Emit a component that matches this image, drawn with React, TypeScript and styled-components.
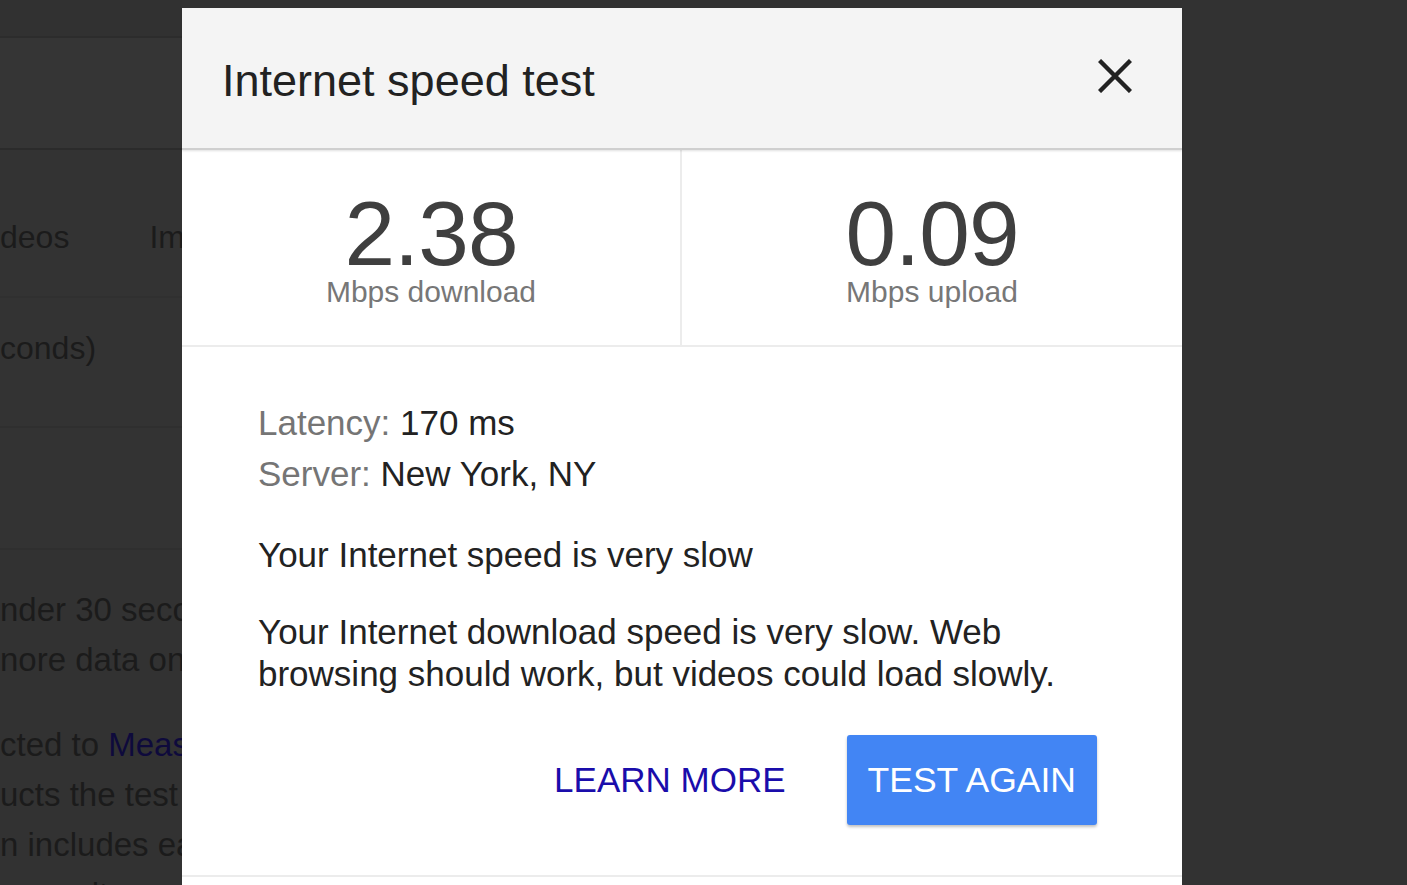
import React from "react";
import styled, { createGlobalStyle } from "styled-components";

const GlobalStyle = createGlobalStyle`
  html, body {
    margin: 0;
    padding: 0;
    background: #323232;
  }
  body {
    font-family: "Liberation Sans", Arial, sans-serif;
  }
`;

const Page = styled.div`
  display: flex;
  width: 1407px;
  height: 885px;
  overflow: hidden;
  background: #323232;
`;

// dimmed search results page that peeks out on the left
const Backdrop = styled.div`
  width: 182px;
  flex-shrink: 0;
  overflow: hidden;
  display: flex;
  flex-direction: column;
  white-space: nowrap;
  color: #1b1b1b;
`;

const BackdropBand = styled.div<{ h: number; bg?: string; line?: string; top?: number }>`
  height: ${({ h }) => h}px;
  flex-shrink: 0;
  box-sizing: border-box;
  padding-top: ${({ top }) => top || 0}px;
  background: ${({ bg }) => bg || "#333333"};
  border-bottom: ${({ line }) => (line ? `2px solid ${line}` : "none")};
  display: flex;
  align-items: flex-start;
  font-size: 32px;
  line-height: 36px;
`;

const Tab = styled.span<{ gap?: number }>`
  margin-left: ${({ gap }) => gap || 0}px;
`;

const BackdropText = styled.div`
  display: flex;
  flex-direction: column;
  padding-top: 35px;
  font-size: 33px;
  line-height: 50px;
`;

const BackdropGap = styled.div`
  height: 35px;
`;

const DimLink = styled.span`
  color: #0e0a3c;
`;

const Modal = styled.div`
  width: 1000px;
  flex-shrink: 0;
  margin-top: 8px;
  background: #ffffff;
  display: flex;
  flex-direction: column;
`;

const Header = styled.div`
  height: 140px;
  background: #f4f4f4;
  display: flex;
  align-items: center;
  justify-content: space-between;
  padding: 0 50px 0 40px;
  border-bottom: 2px solid #cfcfcf;
  box-shadow: 0 1px 2px rgba(0, 0, 0, 0.12);
  position: relative;
  z-index: 1;
`;

const Title = styled.h1`
  margin: 0;
  font-weight: 400;
  font-size: 45px;
  color: #222222;
  padding-top: 5px;
`;

const CloseButton = styled.button`
  border: none;
  background: none;
  padding: 0;
  width: 34px;
  height: 34px;
  margin-top: -4px;
  cursor: pointer;
  display: flex;
`;

const Stats = styled.div`
  display: grid;
  grid-template-columns: 1fr 1fr;
  height: 195px;
  border-bottom: 2px solid #ececec;
`;

const Stat = styled.div<{ divider?: boolean }>`
  display: flex;
  flex-direction: column;
  align-items: center;
  padding-top: 44px;
  border-right: ${({ divider }) => (divider ? "2px solid #ececec" : "none")};
`;

const Speed = styled.div`
  font-size: 91px;
  line-height: 80px;
  letter-spacing: -1px;
  color: #3f3f3f;
`;

const Unit = styled.div`
  font-size: 30px;
  line-height: 32px;
  color: #777777;
  margin-top: 2px;
`;

const Body = styled.div`
  padding: 50px 85px 50px 76px;
  display: flex;
  flex-direction: column;
  border-bottom: 2px solid #ececec;
  font-size: 35px;
  color: #222222;
`;

const InfoLine = styled.div`
  line-height: 51px;
`;

const InfoLabel = styled.span`
  color: #757575;
`;

const Verdict = styled.div`
  margin-top: 35px;
  line-height: 42px;
`;

const Description = styled.p`
  margin: 35px 0 0;
  line-height: 42px;
`;

const Actions = styled.div`
  display: flex;
  justify-content: flex-end;
  align-items: center;
  gap: 61px;
  margin-top: 40px;
`;

const TextButton = styled.button`
  border: none;
  background: none;
  padding: 0;
  font-family: inherit;
  font-size: 35px;
  color: #1a0dab;
  cursor: pointer;
`;

const PrimaryButton = styled.button`
  border: none;
  border-radius: 3px;
  height: 90px;
  padding: 0 21px;
  background: #4285f4;
  color: #ffffff;
  font-family: inherit;
  font-size: 35.5px;
  box-shadow: 0 2px 3px rgba(0, 0, 0, 0.25);
  cursor: pointer;
`;

const CloseIcon = () => (
  <svg width="34" height="34" viewBox="0 0 34 34">
    <path d="M1.5 1.5 L32.5 32.5 M32.5 1.5 L1.5 32.5" stroke="#222" strokeWidth="4.4" />
  </svg>
);

export default function App() {
  return (
    <>
      <GlobalStyle />
      <Page>
        <Backdrop>
          <BackdropBand h={38} bg="#313131" line="#2c2c2c" />
          <BackdropBand h={112} bg="#353535" line="#2b2b2b" />
          <BackdropBand h={148} bg="#333333" line="#303030" top={69}>
            <Tab>deos</Tab>
            <Tab gap={80}>Images</Tab>
          </BackdropBand>
          <BackdropBand h={130} bg="#333333" line="#2f2f2f" top={32}>
            <Tab>conds)</Tab>
          </BackdropBand>
          <BackdropBand h={122} bg="#333333" line="#2f2f2f" />
          <BackdropText>
            <span>nder 30 seconds</span>
            <span>nore data on</span>
            <BackdropGap />
            <span>
              cted to <DimLink>Measurement</DimLink>
            </span>
            <span>ucts the test</span>
            <span>n includes each</span>
            <span>e results</span>
          </BackdropText>
        </Backdrop>

        <Modal>
          <Header>
            <Title>Internet speed test</Title>
            <CloseButton aria-label="Close">
              <CloseIcon />
            </CloseButton>
          </Header>

          <Stats>
            <Stat divider>
              <Speed>2.38</Speed>
              <Unit>Mbps download</Unit>
            </Stat>
            <Stat>
              <Speed>0.09</Speed>
              <Unit>Mbps upload</Unit>
            </Stat>
          </Stats>

          <Body>
            <InfoLine>
              <InfoLabel>Latency:</InfoLabel> 170 ms
            </InfoLine>
            <InfoLine>
              <InfoLabel>Server:</InfoLabel> New York, NY
            </InfoLine>
            <Verdict>Your Internet speed is very slow</Verdict>
            <Description>
              Your Internet download speed is very slow. Web browsing should work, but videos could
              load slowly.
            </Description>
            <Actions>
              <TextButton>LEARN MORE</TextButton>
              <PrimaryButton>TEST AGAIN</PrimaryButton>
            </Actions>
          </Body>
        </Modal>
      </Page>
    </>
  );
}
